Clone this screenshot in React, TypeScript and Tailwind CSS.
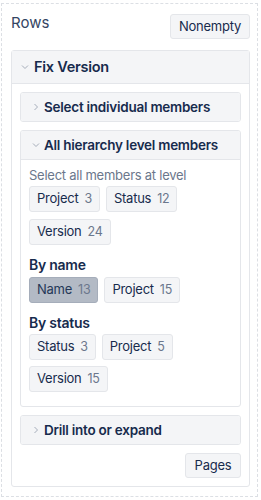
import React from 'react';

const font = { fontFamily: 'Inter, "Noto Sans", sans-serif' };

const Chevron = ({ open }: { open?: boolean }) => (
  <svg width="8" height="8" viewBox="0 0 8 8" className="shrink-0">
    {open ? (
      <path d="M1 2.5 L4 5.5 L7 2.5" fill="none" stroke="#a5adba" strokeWidth="1" />
    ) : (
      <path d="M2.5 1 L5.5 4 L2.5 7" fill="none" stroke="#a5adba" strokeWidth="1" />
    )}
  </svg>
);

const Chip = ({ label, count, active }: { label: string; count: number; active?: boolean }) => (
  <div
    className={
      'h-[26px] flex items-center gap-[6px] px-[7px] rounded-[3px] border text-[13px] tracking-[-0.25px] ' +
      (active ? 'bg-[#b3bac5] border-[#a5adba] text-[#253858]' : 'bg-[#f4f5f7] border-[#e4e6ea] text-[#172b4d]')
    }
  >
    <span>{label}</span>
    <span className="text-[#6b778c] text-[12.5px]">{count}</span>
  </div>
);

const SubHeader = ({ title, open }: { title: string; open?: boolean }) => (
  <div className="h-[28px] flex items-center gap-[4px] pl-[11px] bg-[#f4f5f7] text-[13.5px] tracking-[-0.25px] font-semibold text-[#172b4d]">
    <Chevron open={open} />
    <span>{title}</span>
  </div>
);

export default function App() {
  return (
    <div className="w-[261px] h-[500px] bg-white pt-[3px] pl-[1px]" style={font}>
      <div className="w-[257px] h-[494px] border border-dashed border-[#dcdfe4] pt-[10px] pl-[9px] pr-[7px]">
        {/* Header */}
        <div className="flex items-start justify-between h-[25px] mb-[11px]">
          <span className="text-[15px] leading-[20px] text-[#344563] -mt-[1px]">Rows</span>
          <button className="h-[25px] w-[80px] rounded-[3px] bg-[#f4f5f7] border border-[#e4e6ea] text-[13px] tracking-[-0.25px] text-[#172b4d]">
            Nonempty
          </button>
        </div>

        {/* Fix Version card */}
        <div className="border border-[#e4e6ea] rounded-[3px]">
          <div className="h-[33px] flex items-center gap-[5px] pl-[9px] bg-[#f4f5f7] border-b border-[#e4e6ea] text-[14.5px] tracking-[-0.25px] font-semibold text-[#172b4d]">
            <Chevron open />
            <span>Fix Version</span>
          </div>
          <div className="px-[8px] pt-[8px] pb-[8px] flex flex-col">
            <div className="border border-[#e4e6ea] rounded-[3px] overflow-hidden">
              <SubHeader title="Select individual members" />
            </div>

            <div className="mt-[8px] border border-[#e4e6ea] rounded-[3px] overflow-hidden">
              <div className="border-b border-[#e4e6ea]">
                <SubHeader title="All hierarchy level members" open />
              </div>
              <div className="px-[8px] pt-[6px] pb-[14px]">
                <div className="text-[13px] tracking-[-0.25px] leading-[18px] text-[#6b778c]">Select all members at level</div>
                <div className="mt-[2px] flex flex-wrap gap-x-[6px] gap-y-[7px]">
                  <Chip label="Project" count={3} />
                  <Chip label="Status" count={12} />
                  <Chip label="Version" count={24} />
                </div>
                <div className="mt-[10px] text-[14px] tracking-[-0.25px] leading-[20px] font-semibold text-[#172b4d]">By name</div>
                <div className="mt-[2px] flex flex-wrap gap-x-[6px] gap-y-[7px]">
                  <Chip label="Name" count={13} active />
                  <Chip label="Project" count={15} />
                </div>
                <div className="mt-[10px] text-[14px] tracking-[-0.25px] leading-[20px] font-semibold text-[#172b4d]">By status</div>
                <div className="mt-[1px] flex flex-wrap gap-x-[6px] gap-y-[6px]">
                  <Chip label="Status" count={3} />
                  <Chip label="Project" count={5} />
                  <Chip label="Version" count={15} />
                </div>
              </div>
            </div>

            <div className="mt-[8px] border border-[#e4e6ea] rounded-[3px] overflow-hidden">
              <SubHeader title="Drill into or expand" />
            </div>

            <div className="mt-[8px] flex justify-end">
              <button className="h-[25px] w-[56px] rounded-[3px] bg-[#f4f5f7] border border-[#e4e6ea] text-[13px] tracking-[-0.25px] text-[#172b4d]">
                Pages
              </button>
            </div>
          </div>
        </div>
      </div>
    </div>
  );
}
